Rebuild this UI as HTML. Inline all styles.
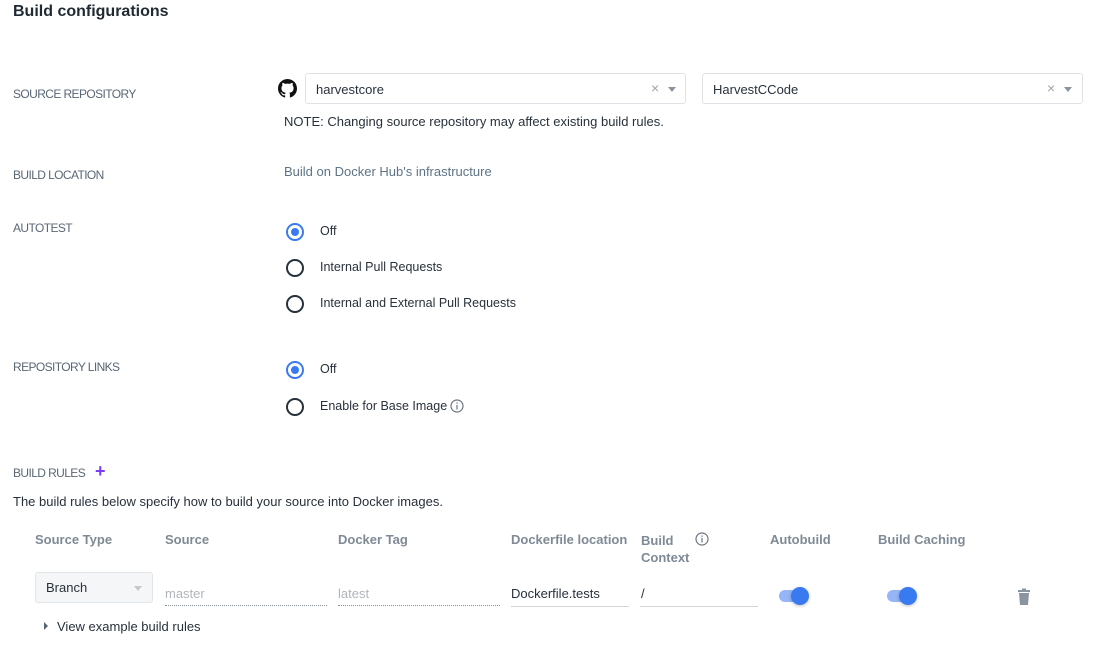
<!DOCTYPE html>
<html><head><meta charset="utf-8"><style>
body{margin:0;width:1096px;height:645px;background:#fff;font-family:"Liberation Sans",sans-serif;color:#27313b;position:relative;overflow:hidden}
.a{position:absolute;white-space:nowrap}
.lbl{font-size:12px;color:#5a6775;letter-spacing:-0.6px}
.t{font-size:13px;letter-spacing:0}
.sel{position:absolute;border:1px solid #dfe3e8;border-radius:3px;height:31px;box-sizing:border-box;background:#fff}
.sel span{position:absolute;left:10px;top:8px;font-size:13px}
.x{position:absolute;top:6px;font-size:14px;color:#9aa3ab}
.car{position:absolute;top:13px;width:0;height:0;border-left:4px solid transparent;border-right:4px solid transparent;border-top:5px solid #8b949d}
.radio{position:absolute;width:14px;height:14px;border:2px solid #27313b;border-radius:50%}
.radio.on{border-color:#3a7af0}
.radio.on:after{content:"";position:absolute;left:3px;top:3px;width:8px;height:8px;border-radius:50%;background:#3a7af0}
.rt{font-size:12.5px;letter-spacing:0}
.th{font-size:13px;font-weight:bold;color:#7e8a95;letter-spacing:0}
.track{position:absolute;width:28px;height:12px;border-radius:6px;background:#95b5f7}
.knob{position:absolute;width:18px;height:18px;border-radius:50%;background:#3a7af0;box-shadow:0 1px 3px rgba(0,0,0,.25)}
</style></head><body>
<div class="a" style="left:13px;top:3px;font-size:16px;font-weight:bold;color:#1f2a33">Build configurations</div>

<div class="a lbl" style="left:13px;top:87px">SOURCE REPOSITORY</div>
<svg class="a" style="left:278px;top:79px" width="19" height="19" viewBox="0 0 16 16"><path fill="#111" d="M8 0C3.58 0 0 3.58 0 8c0 3.540 2.290 6.53 5.47 7.59.4.07.55-.17.55-.38 0-.19-.01-.82-.01-1.49-2.01.37-2.53-.49-2.690-.94-.09-.23-.48-.94-.82-1.130-.28-.15-.68-.52-.01-.53.63-.01 1.08.58 1.23.82.72 1.21 1.87.87 2.33.66.07-.52.28-.87.51-1.07-1.78-.2-3.64-.89-3.640-3.95 0-.87.31-1.59.82-2.15-.08-.2-.36-1.02.08-2.12 0 0 .67-.21 2.2.82.64-.18 1.32-.27 2-.27.68 0 1.36.09 2 .27 1.53-1.04 2.2-.82 2.2-.82.44 1.1.16 1.92.08 2.12.51.56.82 1.27.82 2.15 0 3.07-1.87 3.75-3.65 3.95.29.25.54.73.54 1.48 0 1.07-.01 1.93-.01 2.2 0 .21.15.46.55.38A8.013 8.013 0 0016 8c0-4.42-3.58-8-8-8z"/></svg>
<div class="sel" style="left:305px;top:73px;width:381px"><span>harvestcore</span><div class="x" style="left:345px">×</div><div class="car" style="left:362px"></div></div>
<div class="sel" style="left:702px;top:73px;width:381px"><span>HarvestCCode</span><div class="x" style="left:344px">×</div><div class="car" style="left:361px"></div></div>
<div class="a t" style="left:284px;top:114px">NOTE: Changing source repository may affect existing build rules.</div>

<div class="a lbl" style="left:13px;top:168px">BUILD LOCATION</div>
<div class="a t" style="left:284px;top:164px;color:#5d7487">Build on Docker Hub's infrastructure</div>

<div class="a lbl" style="left:13px;top:221px">AUTOTEST</div>
<div class="radio on" style="left:286px;top:223px"></div><div class="a rt" style="left:320px;top:224px">Off</div>
<div class="radio" style="left:286px;top:259px"></div><div class="a rt" style="left:320px;top:260px">Internal Pull Requests</div>
<div class="radio" style="left:286px;top:295px"></div><div class="a rt" style="left:320px;top:296px">Internal and External Pull Requests</div>

<div class="a lbl" style="left:13px;top:360px">REPOSITORY LINKS</div>
<div class="radio on" style="left:286px;top:361px"></div><div class="a rt" style="left:320px;top:362px">Off</div>
<div class="radio" style="left:286px;top:398px"></div><div class="a rt" style="left:320px;top:399px">Enable for Base Image</div>
<svg class="a" style="left:450px;top:399px" width="14" height="14" viewBox="0 0 14 14"><circle cx="7" cy="7" r="6" fill="none" stroke="#6b7580" stroke-width="1.2"/><rect x="6.4" y="6" width="1.2" height="4.5" fill="#6b7580"/><rect x="6.4" y="3.5" width="1.2" height="1.3" fill="#6b7580"/></svg>

<div class="a lbl" style="left:13px;top:466px">BUILD RULES</div>
<div class="a" style="left:95px;top:461px;font-size:18px;color:#7a3cf0;font-weight:bold">+</div>
<div class="a t" style="left:13px;top:494px">The build rules below specify how to build your source into Docker images.</div>

<div class="a th" style="left:35px;top:532px">Source Type</div>
<div class="a th" style="left:165px;top:532px">Source</div>
<div class="a th" style="left:338px;top:532px">Docker Tag</div>
<div class="a th" style="left:511px;top:532px">Dockerfile location</div>
<div class="a th" style="left:641px;top:532px;line-height:17px">Build<br>Context</div>
<svg class="a" style="left:695px;top:532px" width="14" height="14" viewBox="0 0 14 14"><circle cx="7" cy="7" r="6" fill="none" stroke="#6b7580" stroke-width="1.2"/><rect x="6.4" y="6" width="1.2" height="4.5" fill="#6b7580"/><rect x="6.4" y="3.5" width="1.2" height="1.3" fill="#6b7580"/></svg>
<div class="a th" style="left:770px;top:532px">Autobuild</div>
<div class="a th" style="left:878px;top:532px">Build Caching</div>

<div class="sel" style="left:35px;top:572px;width:118px;background:#f5f6f7;border-color:#e1e4e8"><span style="top:7px">Branch</span><div class="car" style="left:98px;border-top-color:#c4c9ce"></div></div>
<div class="a t" style="left:165px;top:586px;color:#b0b6bc">master</div>
<div class="a" style="left:165px;top:605px;width:162px;border-bottom:1px dotted #8a949d"></div>
<div class="a t" style="left:338px;top:586px;color:#b0b6bc">latest</div>
<div class="a" style="left:338px;top:605px;width:162px;border-bottom:1px dotted #8a949d"></div>
<div class="a t" style="left:511px;top:586px">Dockerfile.tests</div>
<div class="a" style="left:511px;top:606px;width:118px;border-bottom:1px solid #d0d5da"></div>
<div class="a t" style="left:641px;top:586px">/</div>
<div class="a" style="left:640px;top:606px;width:118px;border-bottom:1px solid #d0d5da"></div>

<div class="track" style="left:779px;top:590px"></div><div class="knob" style="left:791px;top:587px"></div>
<div class="track" style="left:887px;top:590px"></div><div class="knob" style="left:899px;top:587px"></div>
<svg class="a" style="left:1017px;top:588px" width="14" height="18" viewBox="0 0 14 18"><rect x="1" y="2" width="12" height="2" fill="#8b959f"/><rect x="5" y="0.5" width="4" height="2" fill="#8b959f"/><path d="M2 5h10l-1 12H3z" fill="#8b959f"/></svg>

<div class="a" style="left:44px;top:622px;width:0;height:0;border-top:4px solid transparent;border-bottom:4px solid transparent;border-left:4px solid #5a6570"></div>
<div class="a t" style="left:57px;top:619px">View example build rules</div>
</body></html>
